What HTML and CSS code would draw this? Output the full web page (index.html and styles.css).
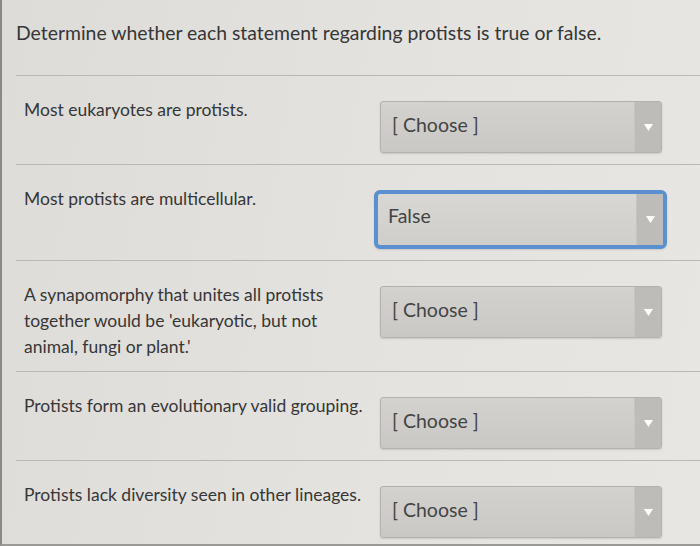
FILE: index.html
```html
<!DOCTYPE html>
<html lang="en">
<head>
    <meta charset="UTF-8">
    <meta name="viewport" content="width=device-width, initial-scale=1.0">
    <title>Protists</title>
    <link rel="stylesheet" href="styles.css">
</head>
<body>
    <div class="question">
        <p class="prompt">Determine whether each statement regarding protists is true or false.</p>

        <div class="row">
            <div class="statement">Most eukaryotes are protists.</div>
            <div class="choice">
                <span class="choice-text">[ Choose ]</span>
                <span class="choice-arrow"><svg width="9" height="7" viewBox="0 0 9 7"><path d="M0 0 H9 L4.5 7 Z" fill="#fff"/></svg></span>
            </div>
        </div>

        <div class="row">
            <div class="statement">Most protists are multicellular.</div>
            <div class="choice focused">
                <span class="choice-text">False</span>
                <span class="choice-arrow"><svg width="9" height="7" viewBox="0 0 9 7"><path d="M0 0 H9 L4.5 7 Z" fill="#fff"/></svg></span>
            </div>
        </div>

        <div class="row">
            <div class="statement">A synapomorphy that unites all protists together would be 'eukaryotic, but not animal, fungi or plant.'</div>
            <div class="choice">
                <span class="choice-text">[ Choose ]</span>
                <span class="choice-arrow"><svg width="9" height="7" viewBox="0 0 9 7"><path d="M0 0 H9 L4.5 7 Z" fill="#fff"/></svg></span>
            </div>
        </div>

        <div class="row">
            <div class="statement">Protists form an evolutionary valid grouping.</div>
            <div class="choice">
                <span class="choice-text">[ Choose ]</span>
                <span class="choice-arrow"><svg width="9" height="7" viewBox="0 0 9 7"><path d="M0 0 H9 L4.5 7 Z" fill="#fff"/></svg></span>
            </div>
        </div>

        <div class="row">
            <div class="statement">Protists lack diversity seen in other lineages.</div>
            <div class="choice">
                <span class="choice-text">[ Choose ]</span>
                <span class="choice-arrow"><svg width="9" height="7" viewBox="0 0 9 7"><path d="M0 0 H9 L4.5 7 Z" fill="#fff"/></svg></span>
            </div>
        </div>
    </div>
</body>
</html>
```

FILE: styles.css
```css
body {
    margin: 0;
    font-family: Lato, "Open Sans", Arial, sans-serif;
    color: #363636;
    background: linear-gradient(100deg, #dddcd9 0%, #e4e3e0 60%, #e7e6e3 100%);
    height: 546px;
    overflow: hidden;
}

.question {
    height: 544px;
    border-left: 2px solid #8a8987;
    border-bottom: 2px solid #9a9996;
    padding-left: 14px;
}

.prompt {
    margin: 0;
    padding-top: 20px;
    padding-bottom: 29px;
    font-size: 19.4px;
    line-height: 26px;
}

.row {
    display: flex;
    align-items: flex-start;
    border-top: 1px solid #b9b8b5;
    padding: 21px 0 11px 8px;
}

.statement {
    width: 342px;
    font-size: 17.5px;
    line-height: 26px;
}

.choice {
    display: flex;
    margin-top: 4px;
    margin-left: 14px;
    width: 280px;
    height: 50px;
    border: 1px solid #b3b2af;
    border-radius: 3px;
    background: linear-gradient(180deg, #d3d2cf 0%, #c9c8c5 100%);
    box-shadow: 0 1px 2px rgba(0, 0, 0, 0.12);
}

.choice.focused {
    margin-left: 8px;
    width: 285px;
    height: 51px;
    border: 4px solid #5a8fd0;
    border-radius: 6px;
    background: linear-gradient(180deg, #d8d7d4 0%, #cfcecb 100%);
}

.choice-text {
    flex: 1;
    padding: 12px 0 0 11px;
    font-size: 19.5px;
    line-height: 22px;
    color: #444;
}

.focused .choice-text {
    padding-top: 11px;
    padding-left: 10px;
}

.choice-arrow {
    width: 26px;
    display: flex;
    align-items: center;
    justify-content: center;
    background: #bdbcb9;
    border-left: 1px solid #c6c5c2;
}
```
